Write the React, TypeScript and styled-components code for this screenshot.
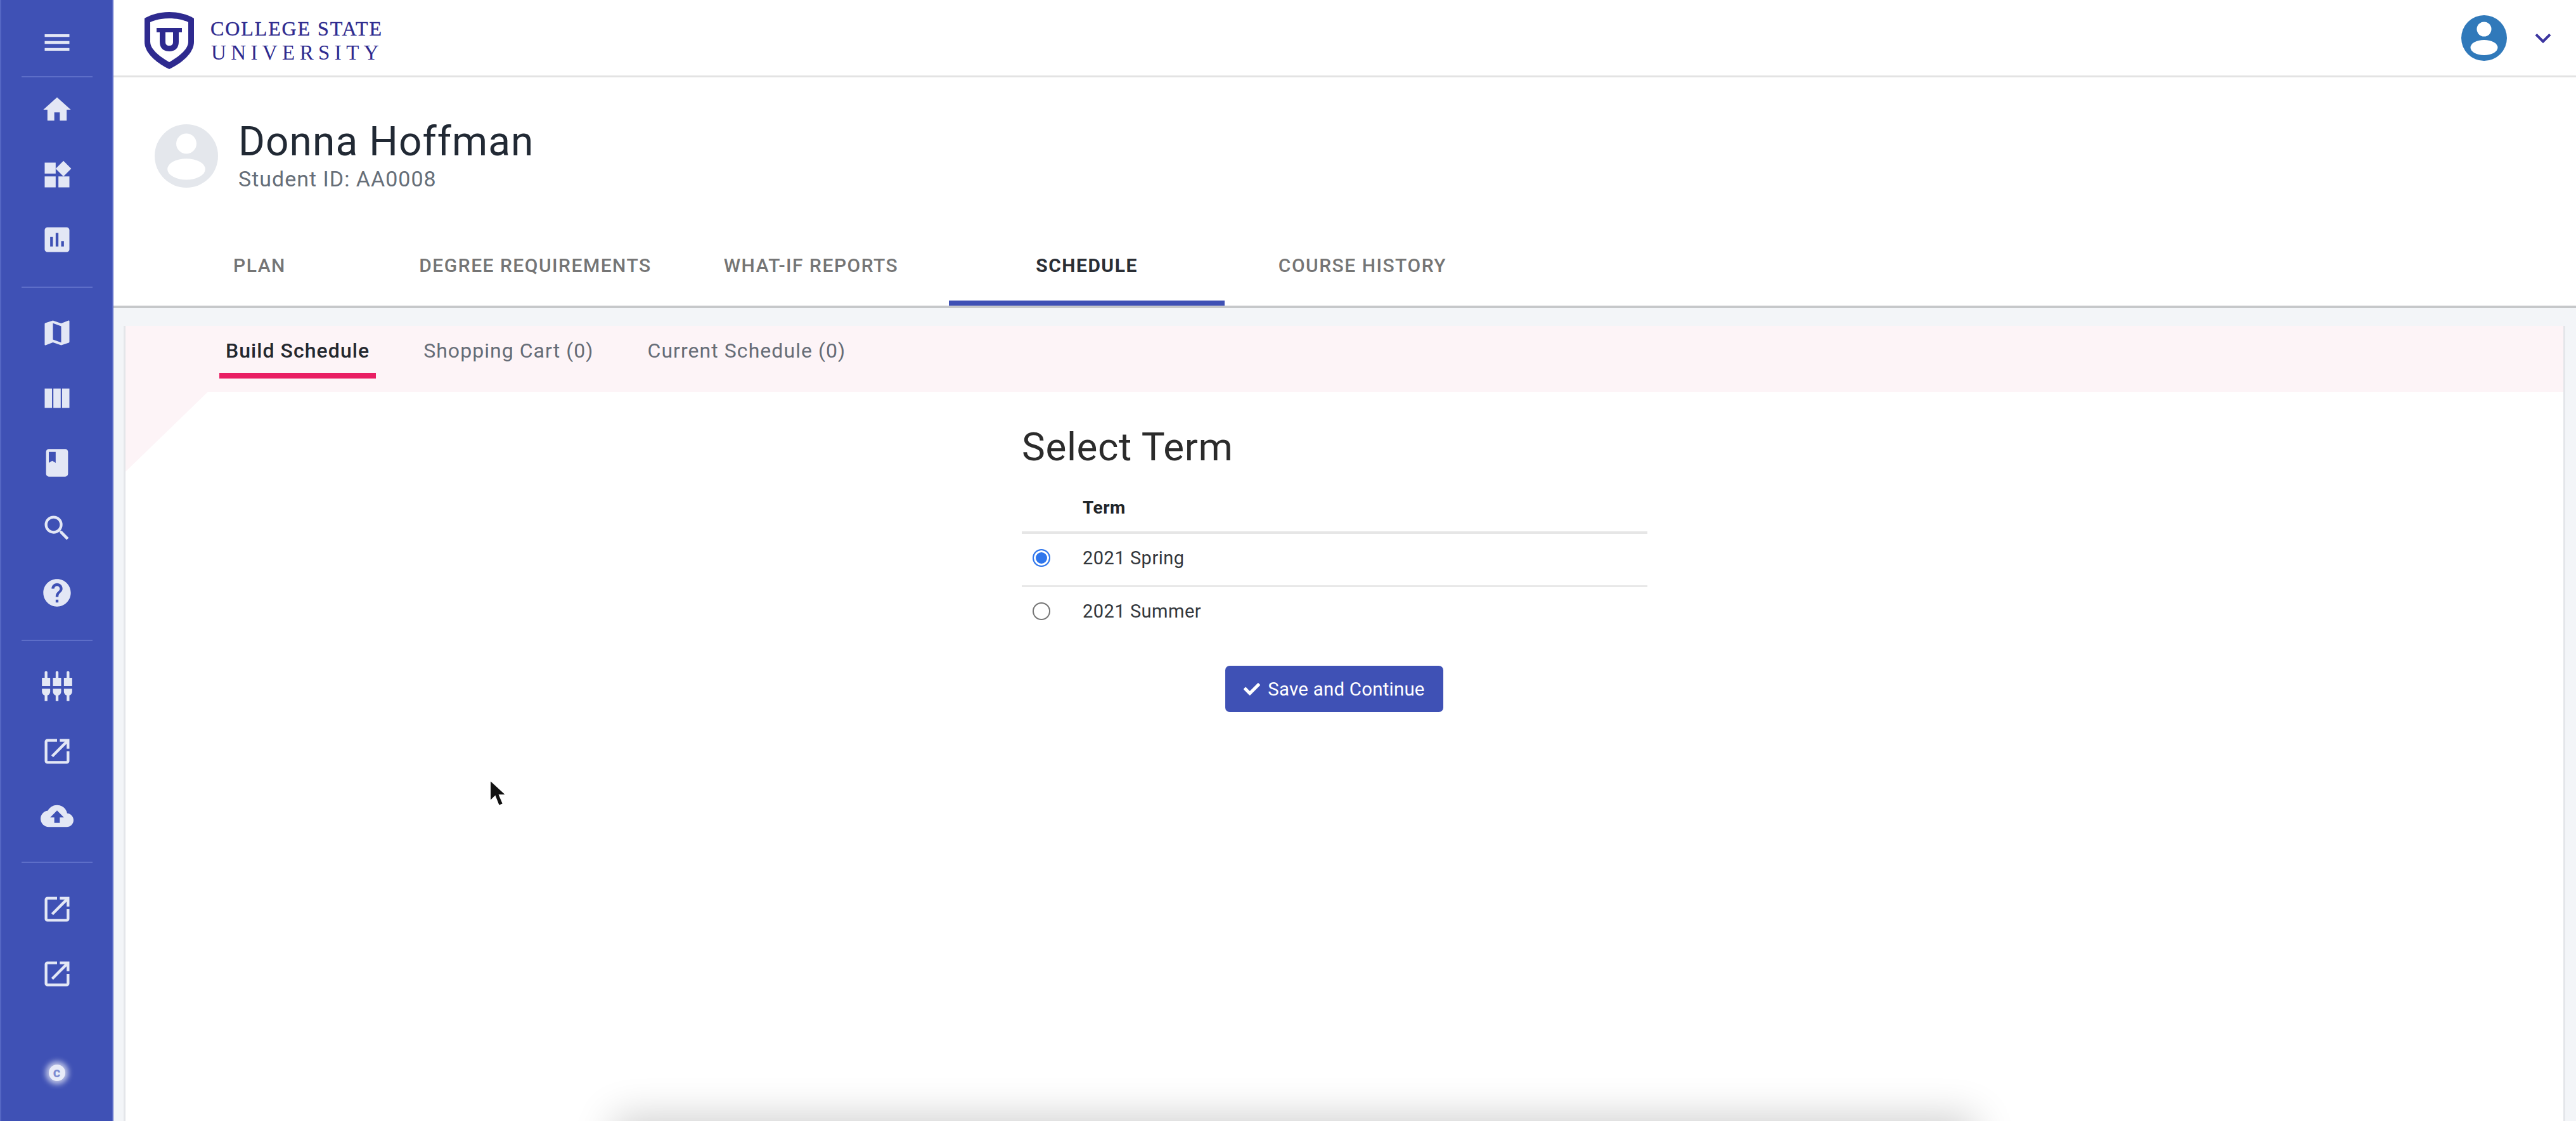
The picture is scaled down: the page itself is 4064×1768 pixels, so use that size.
import React from "react";
import styled, { createGlobalStyle } from "styled-components";
import {
  MdMenu, MdHome, MdWidgets, MdAssessment, MdMap, MdViewColumn, MdBook,
  MdSearch, MdHelp, MdSettingsInputComponent, MdOpenInNew, MdCloudUpload,
  MdExpandMore,
} from "react-icons/md";
import { FaCheck } from "react-icons/fa";

const Global = createGlobalStyle`
  html, body { margin: 0; padding: 0; background: #fff; }
  body { font-family: Roboto, "Liberation Sans", sans-serif; }
`;

const Page = styled.div`
  position: relative;
  display: flex;
  width: 4064px;
  height: 1768px;
  overflow: hidden;
  background: #fff;
`;

const Sidebar = styled.nav`
  flex: 0 0 179px;
  display: flex;
  flex-direction: column;
  align-items: center;
  background: #3f51b5;
  border-left: 2px solid #5567c4;
  border-right: 2px solid #5a6bc6;
  box-sizing: border-box;
  color: #e3e7f5;
`;

const NavSlot = styled.div<{ $h?: number; $top?: number }>`
  height: ${(p) => p.$h ?? 102.6}px;
  padding-top: ${(p) => p.$top ?? 0}px;
  box-sizing: border-box;
  width: 100%;
  flex: none;
  display: flex;
  align-items: center;
  justify-content: center;
  svg { width: 52px; height: 52px; display: block; }
`;

const NavRule = styled.hr`
  flex: none;
  width: 112px;
  height: 2px;
  margin: 0;
  border: 0;
  background: #5d6ec8;
`;

const Spacer = styled.div<{ $h: number }>`
  flex: none;
  height: ${(p) => p.$h}px;
`;

const Copyright = styled.div`
  width: 26px;
  height: 26px;
  border-radius: 50%;
  background: #e8ebf8;
  box-shadow: 0 0 8px 5px rgba(255, 255, 255, 0.65);
  color: #7d8bd0;
  font-size: 22px;
  font-weight: 700;
  line-height: 26px;
  text-align: center;
`;

const Main = styled.div`
  flex: 1;
  min-width: 0;
  display: flex;
  flex-direction: column;
`;

const TopBar = styled.header`
  flex: none;
  height: 122px;
  box-sizing: border-box;
  display: flex;
  align-items: center;
  padding: 0 27px 0 47px;
  border-bottom: 3px solid #e3e3e3;
`;

const Logo = styled.div`
  display: flex;
  align-items: center;
  gap: 24px;
  margin-top: 8px;
  color: #2e2a8f;
  svg { width: 82px; height: 92px; display: block; }
`;

const LogoText = styled.div`
  display: flex;
  flex-direction: column;
  font-family: "Liberation Serif", serif;
  white-space: nowrap;
`;

const LogoTop = styled.span`
  font-size: 32px;
  line-height: 38px;
  letter-spacing: 1.9px;
  -webkit-text-stroke: 0.4px #2e2a8f;
`;

const LogoBottom = styled.span`
  font-size: 33px;
  line-height: 38px;
  letter-spacing: 7.4px;
  padding-left: 1px;
`;

const TopActions = styled.div`
  margin-left: auto;
  display: flex;
  align-items: center;
  gap: 32px;
`;

const Chevron = styled(MdExpandMore)`
  width: 50px;
  height: 50px;
  color: #3c36a0;
  display: block;
`;

const Profile = styled.section`
  flex: none;
  height: 168px;
  display: flex;
  align-items: flex-start;
  gap: 32px;
  padding: 74px 0 0 65px;
`;

const ProfileText = styled.div`
  display: flex;
  flex-direction: column;
  margin-top: -10px;
`;

const Name = styled.h1`
  margin: 0;
  font-size: 64px;
  line-height: 76px;
  font-weight: 400;
  letter-spacing: 1.05px;
  color: #212934;
`;

const StudentId = styled.div`
  font-size: 34px;
  line-height: 40px;
  color: #666e78;
  letter-spacing: 1px;
`;

const TabBar = styled.div`
  flex: none;
  display: flex;
  height: 122px;
  box-sizing: border-box;
  padding-left: 13px;
  border-bottom: 4px solid #c6c8ca;
`;

const Tab = styled.div<{ $active?: boolean }>`
  flex: 0 0 435px;
  box-sizing: border-box;
  height: 118px;
  padding-top: 35px;
  text-align: center;
  font-size: 30px;
  line-height: 40px;
  font-weight: 500;
  letter-spacing: 1.5px;
  color: ${(p) => (p.$active ? "#2a2e35" : "#757575")};
  ${(p) => (p.$active ? "font-weight: 700; border-bottom: 8px solid #3f51b5;" : "")}
`;

const Content = styled.div`
  flex: 1;
  display: flex;
  background: #f3f5f8;
  padding: 28px 17px 0 16px;
  min-height: 0;
`;

const Card = styled.main`
  flex: 1;
  display: flex;
  flex-direction: column;
  background: #fff;
  border-left: 3px solid #e4e6ea;
  border-right: 3px solid #e4e6ea;
`;

const SubNav = styled.div`
  position: relative;
  flex: none;
  height: 104px;
  box-sizing: border-box;
  display: flex;
  gap: 65px;
  padding: 0 0 0 148px;
  background: #fdf4f7;
  &::after {
    content: "";
    position: absolute;
    left: 0;
    top: 100%;
    width: 130px;
    height: 126px;
    background: #fdf4f7;
    clip-path: polygon(0 0, 100% 0, 0 100%);
  }
`;

const SubTab = styled.div<{ $active?: boolean }>`
  box-sizing: border-box;
  height: 83px;
  padding: 19px 10px 0;
  font-size: 32px;
  line-height: 40px;
  letter-spacing: 1.05px;
  white-space: nowrap;
  color: ${(p) => (p.$active ? "#23272e" : "#666c76")};
  font-weight: ${(p) => (p.$active ? 500 : 400)};
  border-bottom: 9px solid ${(p) => (p.$active ? "#e91e63" : "transparent")};
`;

const Body = styled.div`
  flex: 1;
  display: flex;
  flex-direction: column;
  align-items: flex-start;
  padding: 52px 0 0 1414px;
`;

const Title = styled.h2`
  margin: 0;
  font-size: 62px;
  line-height: 70px;
  font-weight: 400;
  color: #2b2b2b;
  letter-spacing: 0.6px;
`;

const Table = styled.div`
  width: 987px;
  margin-top: 22px;
`;

const Row = styled.div<{ $head?: boolean }>`
  display: grid;
  grid-template-columns: 96px 1fr;
  align-items: center;
  height: ${(p) => (p.$head ? 80 : 84)}px;
  padding-bottom: ${(p) => (p.$head ? 0 : 8)}px;
  box-sizing: border-box;
  font-size: ${(p) => (p.$head ? 28 : 29)}px;
  letter-spacing: 0.5px;
  color: ${(p) => (p.$head ? "#212529" : "#33373c")};
  font-weight: ${(p) => (p.$head ? 700 : 400)};
  border-bottom: ${(p) => (p.$head ? "4px solid #e6e6e6" : "none")};
`;

const RowRule = styled.div`
  height: 3px;
  background: #e8e8e8;
  margin-top: -3px;
`;

const Radio = styled.span<{ $on?: boolean }>`
  justify-self: start;
  margin-left: 17px;
  width: 28px;
  height: 28px;
  box-sizing: border-box;
  border-radius: 50%;
  background: ${(p) => (p.$on ? "#2f76ec" : "#fff")};
  border: 2px solid ${(p) => (p.$on ? "#2f76ec" : "#767676")};
  box-shadow: ${(p) => (p.$on ? "inset 0 0 0 3px #fff" : "none")};
`;

const ActionRow = styled.div`
  width: 987px;
  display: flex;
  justify-content: flex-start;
  padding: 40px 0 0 321px;
  box-sizing: border-box;
`;

const PrimaryButton = styled.button`
  width: 344px;
  height: 73px;
  box-sizing: border-box;
  border: 0;
  border-radius: 7px;
  background: #3f51b5;
  color: #fff;
  font-family: inherit;
  font-size: 29.4px;
  letter-spacing: 0.25px;
  display: flex;
  align-items: center;
  justify-content: center;
  gap: 12px;
  padding: 0;
  svg { width: 26px; height: 26px; }
`;

const BottomSheet = styled.div`
  position: absolute;
  left: 975px;
  top: 1768px;
  width: 2135px;
  height: 80px;
  box-shadow: 0 0 64px 6px rgba(0, 0, 0, 0.2);
`;

const Pointer = styled.svg`
  position: absolute;
  left: 771px;
  top: 1228px;
  width: 30px;
  height: 46px;
`;

const Shield = () => (
  <svg viewBox="0 0 82 92" aria-hidden="true">
    <path
      d="M41 1C54 1 69 4 80 11V48C80 66 60 82 41 91C22 82 2 66 2 48V11C13 4 28 1 41 1Z"
      fill="#2e2a8f"
    />
    <path
      d="M41 11C52 11 63 13 71 17V48C71 60 55 72 41 80C27 72 11 60 11 48V17C19 13 30 11 41 11Z"
      fill="#fff"
    />
    <path
      d="M21 26H61V33H56V48C56 58 50 63 41 63C32 63 26 58 26 48V33H21ZM35 33V48C35 52 37 54 41 54C45 54 47 52 47 48V33Z"
      fill="#2e2a8f"
      fillRule="evenodd"
    />
  </svg>
);

const PersonDisc = ({ size, color }: { size: number; color: string }) => (
  <svg viewBox="0 0 72 72" width={size} height={size} aria-hidden="true" style={{ display: "block", flex: "none" }}>
    <circle cx="36" cy="36" r="36" fill={color} />
    <circle cx="36" cy="22" r="11.5" fill="#fff" />
    <ellipse cx="36" cy="51" rx="21.5" ry="12" fill="#fff" />
  </svg>
);

const topNav = [MdHome, MdWidgets, MdAssessment];
const midNav = [MdMap, MdViewColumn, MdBook, MdSearch, MdHelp];
const toolNav = [MdSettingsInputComponent, MdOpenInNew, MdCloudUpload];
const linkNav = [MdOpenInNew, MdOpenInNew];
const tabs = ["PLAN", "DEGREE REQUIREMENTS", "WHAT-IF REPORTS", "SCHEDULE", "COURSE HISTORY"];
const subTabs = ["Build Schedule", "Shopping Cart (0)", "Current Schedule (0)"];

const slots = (list: React.ComponentType[]) =>
  list.map((Icon, i) => (
    <NavSlot key={i}>
      <Icon />
    </NavSlot>
  ));

export default function App() {
  return (
    <Page>
      <Global />
      <Sidebar>
        <NavSlot $h={120} $top={14}>
          <MdMenu />
        </NavSlot>
        <NavRule />
        <Spacer $h={0} />
        {slots(topNav)}
        <Spacer $h={22} />
        <NavRule />
        <Spacer $h={20} />
        {slots(midNav)}
        <Spacer $h={22} />
        <NavRule />
        <Spacer $h={20} />
        {slots(toolNav)}
        <Spacer $h={20} />
        <NavRule />
        <Spacer $h={22} />
        {slots(linkNav)}
        <Spacer $h={53} />
        <NavSlot $h={102}>
          <Copyright>c</Copyright>
        </NavSlot>
      </Sidebar>
      <Main>
        <TopBar>
          <Logo>
            <Shield />
            <LogoText>
              <LogoTop>COLLEGE STATE</LogoTop>
              <LogoBottom>UNIVERSITY</LogoBottom>
            </LogoText>
          </Logo>
          <TopActions>
            <PersonDisc size={72} color="#3079ba" />
            <Chevron />
          </TopActions>
        </TopBar>
        <Profile>
          <PersonDisc size={100} color="#e4e7ec" />
          <ProfileText>
            <Name>Donna Hoffman</Name>
            <StudentId>Student ID: AA0008</StudentId>
          </ProfileText>
        </Profile>
        <TabBar>
          {tabs.map((t) => (
            <Tab key={t} $active={t === "SCHEDULE"}>
              {t}
            </Tab>
          ))}
        </TabBar>
        <Content>
          <Card>
            <SubNav>
              {subTabs.map((t, i) => (
                <SubTab key={t} $active={i === 0}>
                  {t}
                </SubTab>
              ))}
            </SubNav>
            <Body>
              <Title>Select Term</Title>
              <Table>
                <Row $head>
                  <span />
                  <span>Term</span>
                </Row>
                <Row>
                  <Radio $on />
                  <span>2021 Spring</span>
                </Row>
                <RowRule />
                <Row>
                  <Radio />
                  <span>2021 Summer</span>
                </Row>
              </Table>
              <ActionRow>
                <PrimaryButton>
                  <FaCheck />
                  Save and Continue
                </PrimaryButton>
              </ActionRow>
            </Body>
          </Card>
        </Content>
      </Main>
      <BottomSheet />
      <Pointer viewBox="0 0 30 46" aria-hidden="true">
        <path d="M2 2V36L10 28L16 43L23 40L17 26H28Z" fill="#111" stroke="#fff" strokeWidth="2" />
      </Pointer>
    </Page>
  );
}
